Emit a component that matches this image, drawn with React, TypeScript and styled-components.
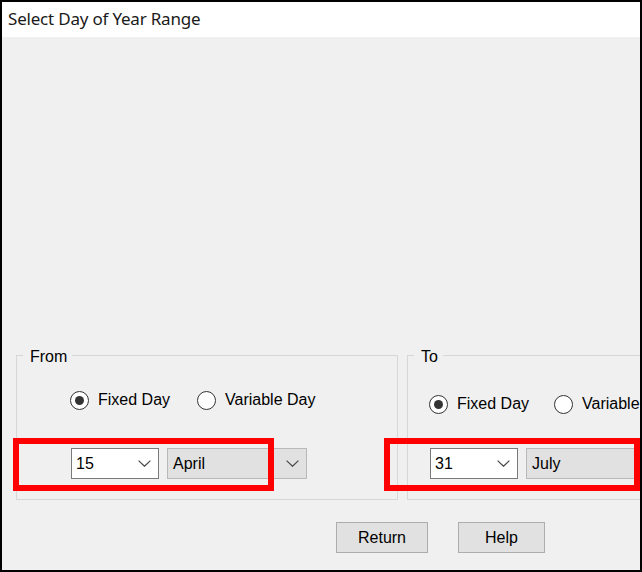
import React from "react";
import styled, { createGlobalStyle } from "styled-components";

const Global = createGlobalStyle`
  html, body { margin: 0; padding: 0; background: #ffffff; }
  * { box-sizing: border-box; }
`;

const Window = styled.div`
  position: relative;
  width: 642px;
  height: 572px;
  border: 2px solid #000000;
  background: #f0f0f0;
  display: flex;
  flex-direction: column;
  overflow: hidden;
  font-family: "Liberation Sans", Arial, sans-serif;
  font-size: 16px;
  color: #000000;
`;

const TitleBar = styled.div`
  height: 35px;
  flex: none;
  background: #ffffff;
  display: flex;
  align-items: center;
  padding: 0 0 2px 6px;
  font-family: "Noto Sans", "Open Sans", sans-serif;
  font-size: 17px;
  color: #1a1a1a;
  letter-spacing: -0.2px;
`;

const Body = styled.div`
  flex: 1;
  display: flex;
  flex-direction: column;
  justify-content: flex-end;
  padding-bottom: 17px;
`;

const GroupsRow = styled.div`
  display: flex;
  gap: 9px;
  padding-left: 14px;
`;

const Group = styled.fieldset`
  flex: none;
  width: 382px;
  margin: 0;
  padding: 0 0 20px 0;
  min-width: 0;
  border: 1px solid #d7d7d7;
`;

const Legend = styled.legend`
  margin-left: 6px;
  padding: 4px 5px 0 7px;
  line-height: 18px;
  font-size: 16px;
`;

const GroupContent = styled.div<{ $indent: number }>`
  display: flex;
  flex-direction: column;
  padding-left: ${(p) => p.$indent}px;
`;

const RadioRow = styled.div<{ $top: number; $gap: number }>`
  display: flex;
  align-items: center;
  height: 20px;
  margin-top: ${(p) => p.$top}px;
  gap: ${(p) => p.$gap}px;
  white-space: nowrap;
`;

const RadioOption = styled.label`
  display: flex;
  align-items: center;
  gap: 9px;
  line-height: 20px;
`;

const RadioCircle = styled.span<{ $checked: boolean }>`
  width: 19px;
  height: 19px;
  flex: none;
  border-radius: 50%;
  border: 1px solid #333333;
  background: #ffffff;
  display: flex;
  align-items: center;
  justify-content: center;
  &::after {
    content: "";
    width: 9px;
    height: 9px;
    border-radius: 50%;
    background: ${(p) => (p.$checked ? "#333333" : "transparent")};
  }
`;

const ComboRow = styled.div<{ $top: number }>`
  display: flex;
  gap: 8px;
  margin-top: ${(p) => p.$top}px;
  margin-left: 1px;
`;

const Combo = styled.div<{ $list?: boolean; $width: number }>`
  flex: none;
  width: ${(p) => p.$width}px;
  height: 31px;
  display: flex;
  align-items: center;
  justify-content: space-between;
  padding: 0 7px 0 ${(p) => (p.$list ? 5 : 4)}px;
  background: ${(p) => (p.$list ? "#e1e1e1" : "#ffffff")};
  border: 1px solid ${(p) => (p.$list ? "#b9b9b9" : "#7a7a7a")};
  font-size: 16px;
`;

const ButtonsRow = styled.div`
  display: flex;
  gap: 30px;
  margin-top: 22px;
  padding-left: 334px;
`;

const Button = styled.button<{ $width: number }>`
  width: ${(p) => p.$width}px;
  height: 31px;
  padding: 0;
  background: #e1e1e1;
  border: 1px solid #adadad;
  font-family: "Liberation Sans", Arial, sans-serif;
  font-size: 16px;
  color: #000000;
`;

const Highlight = styled.div<{ $left: number; $width: number }>`
  position: absolute;
  left: ${(p) => p.$left}px;
  top: 436px;
  width: ${(p) => p.$width}px;
  height: 53px;
  border: 6px solid #ff0000;
  pointer-events: none;
`;

const Chevron = () => (
  <svg width="13" height="7" viewBox="0 0 13 7">
    <polyline points="0.6,0.6 6.5,6.3 12.4,0.6" fill="none" stroke="#4a4a4a" strokeWidth="1.2" />
  </svg>
);

type Side = {
  label: string;
  indent: number;
  radioTop: number;
  radioGap: number;
  comboTop: number;
  day: string;
  month: string;
};

const sides: Side[] = [
  { label: "From", indent: 53, radioTop: 24, radioGap: 27, comboTop: 38, day: "15", month: "April" },
  { label: "To", indent: 21, radioTop: 28, radioGap: 25, comboTop: 34, day: "31", month: "July" },
];

export default function App() {
  return (
    <>
      <Global />
      <Window>
        <TitleBar>Select Day of Year Range</TitleBar>
        <Body>
          <GroupsRow>
            {sides.map((s) => (
              <Group key={s.label}>
                <Legend>{s.label}</Legend>
                <GroupContent $indent={s.indent}>
                  <RadioRow $top={s.radioTop} $gap={s.radioGap}>
                    <RadioOption>
                      <RadioCircle $checked />
                      Fixed Day
                    </RadioOption>
                    <RadioOption>
                      <RadioCircle $checked={false} />
                      Variable Day
                    </RadioOption>
                  </RadioRow>
                  <ComboRow $top={s.comboTop}>
                    <Combo $width={88}>
                      <span>{s.day}</span>
                      <Chevron />
                    </Combo>
                    <Combo $list $width={140}>
                      <span>{s.month}</span>
                      <Chevron />
                    </Combo>
                  </ComboRow>
                </GroupContent>
              </Group>
            ))}
          </GroupsRow>
          <ButtonsRow>
            <Button $width={92}>Return</Button>
            <Button $width={87}>Help</Button>
          </ButtonsRow>
        </Body>
        <Highlight $left={11} $width={261} />
        <Highlight $left={382} $width={256} />
      </Window>
    </>
  );
}
